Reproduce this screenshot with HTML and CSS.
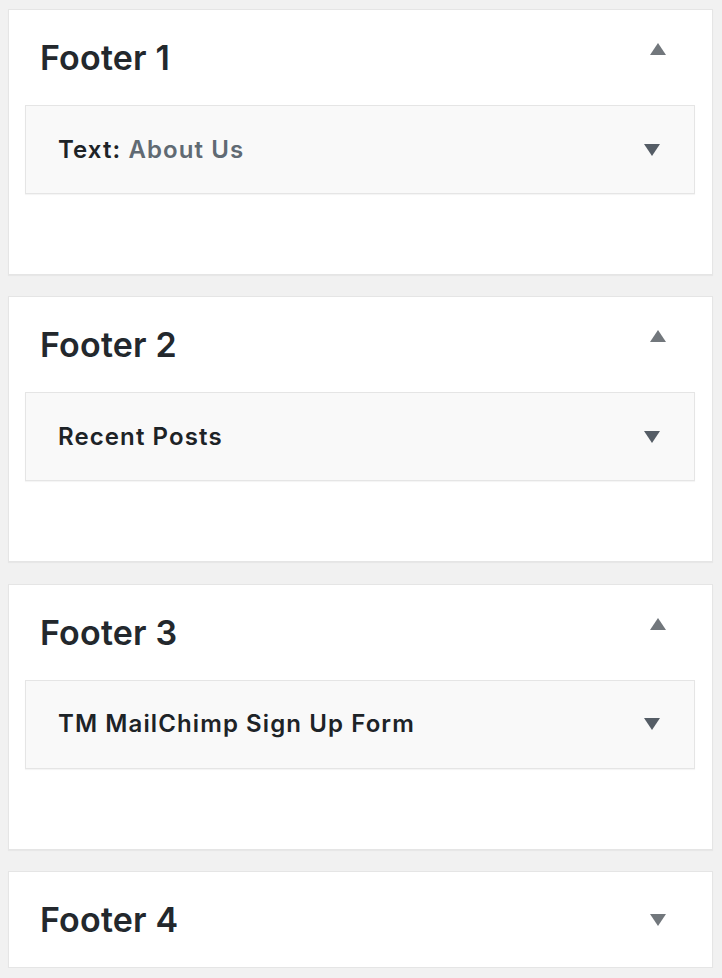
FILE: index.html
```html
<!DOCTYPE html>
<html>
<head>
<meta charset="utf-8">
<link rel="stylesheet" href="styles.css">
</head>
<body>
<div class="areas">
  <section class="area">
    <div class="area-head">
      <h2 class="area-title">Footer 1</h2>
      <span class="tri tri-up"></span>
    </div>
    <div class="widget">
      <h3 class="widget-title">Text:<span class="in-title"> About Us</span></h3>
      <span class="tri tri-down dark"></span>
    </div>
  </section>
  <section class="area">
    <div class="area-head">
      <h2 class="area-title">Footer 2</h2>
      <span class="tri tri-up"></span>
    </div>
    <div class="widget">
      <h3 class="widget-title">Recent Posts</h3>
      <span class="tri tri-down dark"></span>
    </div>
  </section>
  <section class="area">
    <div class="area-head">
      <h2 class="area-title">Footer 3</h2>
      <span class="tri tri-up"></span>
    </div>
    <div class="widget">
      <h3 class="widget-title">TM MailChimp Sign Up Form</h3>
      <span class="tri tri-down dark"></span>
    </div>
  </section>
  <section class="area closed">
    <div class="area-head">
      <h2 class="area-title">Footer 4</h2>
      <span class="tri tri-down"></span>
    </div>
  </section>
</div>
</body>
</html>
```
FILE: styles.css
```css
html, body {
  margin: 0;
  padding: 0;
  background: #f1f1f1;
}
body {
  font-family: Inter, "Liberation Sans", Arial, sans-serif;
  color: #23282d;
}
.areas {
  padding: 9px 0 0 8px;
  width: 705px;
  display: flex;
  flex-direction: column;
  gap: 21.34px;
}
.area {
  box-sizing: border-box;
  height: 266px;
  background: #fff;
  border: 1px solid #e5e5e5;
  box-shadow: 0 1px 1px rgba(0,0,0,0.04);
}
.area.closed {
  height: 97px;
}
.area-head {
  display: flex;
  justify-content: space-between;
  align-items: flex-start;
  padding: 28px 46px 0 31px;
}
.area-title {
  margin: 0;
  font-size: 34px;
  line-height: 40px;
  font-weight: 600;
  letter-spacing: 0.2px;
}
.tri {
  width: 0;
  height: 0;
  border-left: 8px solid transparent;
  border-right: 8px solid transparent;
}
.tri-up {
  margin-top: 5px;
  border-bottom: 12px solid #72777c;
}
.tri-down {
  margin-top: 14px;
  border-top: 12px solid #72777c;
}
.tri-down.dark {
  border-top-color: #555d66;
  margin-top: 0;
}
.widget {
  box-sizing: border-box;
  margin: 27px 17px 0 16px;
  height: 89px;
  background: #f9f9f9;
  border: 1px solid #e5e5e5;
  box-shadow: 0 1px 1px rgba(0,0,0,0.04);
  display: flex;
  align-items: center;
  justify-content: space-between;
  padding: 0 34px 0 32px;
}
.widget-title {
  margin: 0;
  font-size: 24px;
  line-height: 30px;
  font-weight: 600;
  letter-spacing: 1.1px;
  color: #1d2327;
}
.in-title {
  color: #606a73;
}
```
